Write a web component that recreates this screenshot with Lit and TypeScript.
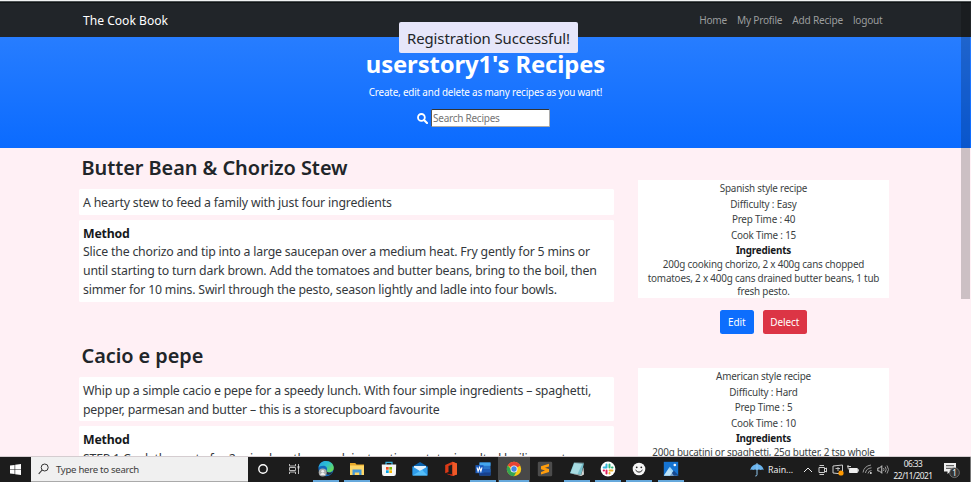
import { LitElement, html, svg, css } from "lit";
import { customElement, property } from "lit/decorators.js";

interface Recipe {
  name: string;
  summary: string[];
  method: string[];
  facts: string[];
  ingredients: string[];
}

const recipes: Recipe[] = [
  {
    name: "Butter Bean & Chorizo Stew",
    summary: ["A hearty stew to feed a family with just four ingredients"],
    method: [
      "Slice the chorizo and tip into a large saucepan over a medium heat. Fry gently for 5 mins or",
      "until starting to turn dark brown. Add the tomatoes and butter beans, bring to the boil, then",
      "simmer for 10 mins. Swirl through the pesto, season lightly and ladle into four bowls.",
    ],
    facts: ["Spanish style recipe", "Difficulty : Easy", "Prep Time : 40", "Cook Time : 15"],
    ingredients: [
      "200g cooking chorizo, 2 x 400g cans chopped",
      "tomatoes, 2 x 400g cans drained butter beans, 1 tub",
      "fresh pesto.",
    ],
  },
  {
    name: "Cacio e pepe",
    summary: [
      "Whip up a simple cacio e pepe for a speedy lunch. With four simple ingredients – spaghetti,",
      "pepper, parmesan and butter – this is a storecupboard favourite",
    ],
    method: ["STEP 1 Cook the pasta for 2 mins less than pack instructions state, in salted boiling water."],
    facts: ["American style recipe", "Difficulty : Hard", "Prep Time : 5", "Cook Time : 10"],
    ingredients: ["200g bucatini or spaghetti, 25g butter, 2 tsp whole"],
  },
];

@customElement("recipe-entry")
export class RecipeEntry extends LitElement {
  @property({ attribute: false }) recipe!: Recipe;

  static styles = css`
    :host { display: grid; grid-template-columns: 535px 251px; column-gap: 24px; padding-left: 79px; height: 188px; color: #212529; white-space: nowrap; }
    .title { margin: 0; height: 41px; line-height: 39px; padding-left: 2.5px; font-size: 19.9px; font-weight: 600; letter-spacing: -0.05px; }
    .box { background: #fff; border-radius: 1.5px; padding: 5px 4px 2px; margin-bottom: 5px; font-size: 12.3px; line-height: 18.7px; color: #34383c; letter-spacing: -0.19px; }
    .strong { font-weight: 700; color: #16191c; }
    .side { padding-top: 32px; text-align: center; }
    .card { background: #fff; height: 118px; font-size: 9.9px; color: #3b3f43; letter-spacing: -0.2px; }
    .fact { height: 15.6px; line-height: 16px; }
    .ing { line-height: 13.6px; }
    .buttons { display: flex; justify-content: center; gap: 9px; margin-top: 12px; }
    .btn { height: 24px; line-height: 25px; border-radius: 2.5px; color: #fff; font-size: 10px; letter-spacing: -0.1px; }
    .edit { background: #0d6efd; width: 33.5px; }
    .del { background: #dc3545; width: 44.5px; }
  `;

  render() {
    const r = this.recipe;
    return html`
      <div>
        <h2 class="title">${r.name}</h2>
        <div class="box">${r.summary.map((l) => html`<div>${l}</div>`)}</div>
        <div class="box"><div class="strong">Method</div>${r.method.map((l) => html`<div>${l}</div>`)}</div>
      </div>
      <div class="side">
        <div class="card">
          ${r.facts.map((f) => html`<div class="fact">${f}</div>`)}
          <div class="fact strong">Ingredients</div>
          ${r.ingredients.map((l) => html`<div class="ing">${l}</div>`)}
        </div>
        <div class="buttons"><div class="btn edit">Edit</div><div class="btn del">Delect</div></div>
      </div>`;
  }
}

const icons = {
  cortana: svg`<circle cx="8" cy="8" r="4.2" fill="none" stroke="#fff" stroke-width="1.4"/>`,
  taskview: svg`<path d="M2.5 3v2h6V3M2.5 13v-2h6v2M2.5 6.5h6v3h-6zM11.5 3v10" fill="none" stroke="#bbb"/><path d="M10.6 5h1.8v2.4h-1.8z" fill="#ddd"/>`,
  edge: svg`<defs><linearGradient id="e" x2="1" y2=".7"><stop offset="0" stop-color="#2a9be0"/><stop offset=".5" stop-color="#2bc0d4"/><stop offset="1" stop-color="#6bdc52"/></linearGradient></defs><circle cx="8" cy="7.7" r="7.6" fill="#1268bd"/><path d="M.5 7C1 2.500 4 0 8 0c4.500 0 7.800 3.200 7.800 6.800 0 3-2.200 4.400-4.800 4.400-2 0-3-.8-2.300-1.800C10 7 8 4.700 5.400 4.700 3 4.700 1 5.500.5 7z" fill="url(#e)"/><path d="M8.500 9.500c.3 2.300 3.500 2.800 6.300 1.200-2.500 4.500-8 3.500-8-.5z" fill="#252a33"/><circle cx="4.700" cy="11.600" r="4" fill="#a9acad"/><circle cx="4.700" cy="10.300" r="1.400" fill="#eee"/><path d="M2.300 14c.3-2.600 4.500-2.600 4.800 0z" fill="#eee"/>`,
  explorer: svg`<path d="M1 2h5.200l1.300 1.500H15V14H1z" fill="#e9a928"/><path d="M1 4.500h14V14H1z" fill="#ffd767"/><path d="M3.500 8.500h9V14h-2.300v-2.500H5.800V14H3.500z" fill="#4598d8"/>`,
  store: svg`<path d="M5 4.500V1.300h6v3.200" fill="none" stroke="#38b3df" stroke-width="1.200"/><path d="M.8 3.500h14.400l-.3 9.500q-.1 2-2 2H3.100q-1.900 0-2-2z" fill="#f4f6f7"/><path d="M5 6h2.700v2.700H5z" fill="#f05125"/><path d="M8.300 6H11v2.700H8.300z" fill="#7eb900"/><path d="M5 9.300h2.700V12H5z" fill="#00a1e8"/><path d="M8.300 9.300H11V12H8.300z" fill="#f9b700"/>`,
  mail: svg`<path d="M.5 5.500 8 1l7.500 4.500V14H.5z" fill="#0a62ad"/><path d="M2 5h12v6H2z" fill="#e4f1fb"/><path d="M.5 5.500 8 10l7.500-4.500V14.500H.5z" fill="#2e9cea"/><path d="M.5 14.500 10 8.800l5.500 5.700z" fill="#54bdf8"/>`,
  office: svg`<path d="M9.500.8 14 2.500v11L9.500 15l-6-2.200 5.800.6V3.600L5.500 5v6L2.200 12.300V4z" fill="#db3a17"/><path d="M9.500.8 14 2.500v11L9.500 15z" fill="#f05a28"/><path d="m3.500 12.800 6 2.200v-1.800z" fill="#aa2014"/>`,
  word: svg`<path d="M4.500 1.500h11v13h-11z" fill="#2a76c9"/><path d="M4.500 1.500h11v3.300h-11z" fill="#43a6ed"/><path d="M4.500 8h11v3.300h-11z" fill="#1f5bb5"/><path d="M4.500 11.300h11v3.200h-11z" fill="#183f8c"/><path d="M.5 4.200h8v8h-8z" fill="#195abe"/><path d="m2 6.300 1.100 4 1.400-4 1.400 4L7 6.300" fill="none" stroke="#fff" stroke-width="1.100"/>`,
  chrome: svg`<circle cx="8" cy="8" r="7.200" fill="#f9c915"/><path d="M8 8 1.760 4.400A7.200 7.200 0 0 1 14.240 4.400z" fill="#e84335"/><path d="M8 8H4.800L1.760 4.400A7.200 7.200 0 0 0 8 15.200l3-5.600z" fill="#34a552"/><path d="M8 4.500h6.300L11 6z" fill="#e84335"/><circle cx="8" cy="8" r="3.500" fill="#f6f6f6"/><circle cx="8" cy="8" r="2.700" fill="#4285e8"/>`,
  sublime: svg`<rect x=".8" y=".8" width="14.400" height="14.400" rx="1.200" fill="#4c4c4c"/><path d="m12 2.800-8 2.500v3l4 1.300-4 1.300V13.500l8-2.600v-3L8 6.700l4-1.300z" fill="#ff9d0c"/>`,
  notes: svg`<path d="M5 1.500 15 2l-2.800 12L1 12.200z" fill="#76bfcb"/><path d="m5.500 2 8 .5-5 10.500-7-1z" fill="#a9dce2"/><path d="m1 12.200 11.200 1.800 2.300-8 .5 7.500-2.800 1.500z" fill="#d6d9d7"/><path d="M5 1.500 15 2" stroke="#4c5c5f"/>`,
  slack: svg`<circle cx="8" cy="8" r="7.400" fill="#fff"/><g fill="none" stroke-width="2" stroke-linecap="round"><path d="M6.500 3.500v3M3.700 6.500h2.500" stroke="#36b7dc"/><path d="M9.500 3.500v3M12.500 6.500h-.5" stroke="#2eb67d"/><path d="M9.600 9.500h2.800M9.500 12v.5" stroke="#ecb22e"/><path d="M6.500 9.600v2.900M3.700 9.500H4" stroke="#e01e5a"/></g>`,
  smile: svg`<circle cx="8" cy="8" r="6.300" fill="#f5f5f5"/><circle cx="5.700" cy="6.300" r=".9" fill="#222"/><circle cx="10.300" cy="6.300" r=".9" fill="#222"/><path d="M4.500 9q3.500 4.300 7 0" fill="none" stroke="#222"/>`,
  photos: svg`<path d="M.8.800h14.400v14H.8z" fill="#1674d2"/><path d="m.8 14.800 6-9 7.500 9z" fill="#a2d8f7"/><path d="m6.800 14.800 4-5.300 4.400 4.500v.8z" fill="#16498e"/><path d="m.8 14.800 5-7.500 5 7.500z" fill="#d2edfa" opacity=".55"/><circle cx="11.800" cy="4" r="1.300" fill="#fff"/>`,
};

const apps: { icon: keyof typeof icons; state?: string }[] = [
  { icon: "cortana" }, { icon: "taskview" }, { icon: "edge", state: "open" }, { icon: "explorer", state: "open" },
  { icon: "store" }, { icon: "mail" }, { icon: "office" }, { icon: "word", state: "open" },
  { icon: "chrome", state: "active" }, { icon: "sublime" }, { icon: "notes", state: "open" },
  { icon: "slack", state: "open" }, { icon: "smile", state: "open" }, { icon: "photos", state: "open" },
];

@customElement("task-bar")
export class TaskBar extends LitElement {
  static styles = css`
    :host { display: flex; height: 25px; background: #1c1c1c; color: #eee; font-size: 8.8px; white-space: nowrap; }
    svg { display: block; }
    .start { width: 31px; display: grid; place-items: center; }
    .search { width: 216.500px; height: 24px; background: #f0f0f0; color: #3d3d3d; display: flex; align-items: center; font-size: 9.6px; letter-spacing: -0.28px; box-sizing: border-box; padding-left: 7px; gap: 7px; box-shadow: 0 1px #aaa; }
    .app { width: 31.350px; box-sizing: border-box; padding-top: 4px; display: flex; flex-direction: column; align-items: center; justify-content: space-between; }
    .active { background: #484848; }
    .bar { height: 2px; width: 26px; }
    .open .bar, .active .bar { background: #66a9dc; }
    .active .bar { width: 30px; }
    .tray { margin-left: auto; display: flex; align-items: center; }
    .cell { width: 15px; display: grid; place-items: center; }
    .rain { width: 32px; padding-left: 4px; }
    .clock { width: 46px; text-align: center; line-height: 11.500px; font-size: 8.300px; letter-spacing: -0.5px; }
    .note { width: 34px; display: grid; place-items: center start; }
    .note svg { margin-left: 6px; }
    .desk { width: 1px; height: 25px; background: #777; }
    .num { font-size: 8px; }
  `;

  render() {
    return html`
      <div class="start"><svg width="11" height="11" viewBox="0 0 11 11"><path d="M0 1.500 4.600.9v4.300H0zM5.200.8 11 0v5.200H5.200zM0 5.800h4.600v4.300L0 9.500zM5.200 5.800H11V11l-5.800-.8z" fill="#fff"/></svg></div>
      <div class="search">
        <svg width="11" height="12" viewBox="0 0 11 12"><circle cx="6.700" cy="4.500" r="3.500" fill="none" stroke="#333"/><path d="M4.200 7 .7 10.800" stroke="#333" stroke-width="1.100"/></svg>
        <span>Type here to search</span>
      </div>
      ${apps.map((a) => html`<div class="app ${a.state ?? ""}"><svg width="16" height="16" viewBox="0 0 16 16">${icons[a.icon]}</svg><div class="bar"></div></div>`)}
      <div class="tray">
        <svg width="14" height="14" viewBox="0 0 14 14"><path d="M.3 7.300C.8 3.500 3.500 1.200 7 1.200s6.200 2.300 6.700 6.100q-1.500-1.300-2.800-.2-1.900-1.300-3.900 0-2-1.300-3.900 0Q1.800 6 .3 7.300z" fill="#6ab4ee"/><path d="M7 0v11.500q0 1.700-1.700 1.500" fill="none" stroke="#8ec8f2"/></svg>
        <span class="rain">Rain...</span>
        <div class="cell"><svg width="10" height="8" viewBox="0 0 10 8"><path d="m1 6 4-4 4 4" fill="none" stroke="#eee"/></svg></div>
        <div class="cell"><svg width="11" height="12" viewBox="0 0 11 12"><path d="M2 3.500h5.500v5H2zM7.500 5 9.500 4v4l-2-1M2.500 1.500h4.500M2.500 10.500h4.500" fill="none" stroke="#ccc"/></svg></div>
        <div class="cell"><svg width="12" height="12" viewBox="0 0 12 12"><path d="M1 2 10.500 1v9L1 9z" fill="none" stroke="#ccc"/><path d="M3.500 4.500H8M6 3v4" stroke="#bbb"/><circle cx="9" cy="9" r="2.600" fill="#f90"/></svg></div>
        <div class="cell"><svg width="12" height="10" viewBox="0 0 12 10"><path d="M2.500 3.500h7.800v4H2.500z" fill="#eee" stroke="#eee"/><path d="M10.800 4.300h1v2.300h-1z" fill="#ddd"/><path d="M.3 1.500H4M1 0v3.500L3 5" stroke="#ccc" fill="none"/></svg></div>
        <div class="cell"><svg width="11" height="11" viewBox="0 0 11 11" fill="none" stroke="#999"><path d="M1 8.500Q2 2 9 1M3.500 9Q4 4.500 9.500 3.800M6 9.500q.2-2.700 3.500-3"/><circle cx="8.800" cy="9" r="1" fill="#ddd" stroke="none"/></svg></div>
        <div class="cell"><svg width="12" height="11" viewBox="0 0 12 11" fill="none" stroke="#ccc"><path d="M.8 4h1.700l2.300-2.300v7.600L2.500 7H.8z"/><path d="M6.500 4q1 1.500 0 3M8.200 2.700q2 2.800 0 5.600M10 1.500q3 4 0 8" stroke="#999"/></svg></div>
        <div class="clock"><div>06:33</div><div>22/11/2021</div></div>
        <div class="note"><svg width="20" height="18" viewBox="0 0 20 18"><path d="M2 2h12v8.500H8.500L5.500 13v-2.500H2z" fill="#eee"/><path d="M4 4.700h8M4 7.300h8" stroke="#444"/><circle cx="12.500" cy="11.700" r="4.900" fill="#343434" stroke="#999" stroke-width=".6"/><text class="num" x="12.500" y="14.600" text-anchor="middle" fill="#fff">1</text></svg></div>
        <div class="desk"></div>
      </div>`;
  }
}

@customElement("app-root")
export class AppRoot extends LitElement {
  static styles = css`
    :host { display: flex; flex-direction: column; position: relative; width: 971px; height: 482px; overflow: hidden; background: #fff0f5; font-family: "Noto Sans", "Open Sans", sans-serif; }
    .nav { flex: none; box-sizing: border-box; height: 37px; background: #212529; border-top: 1px solid #f2f4f4; box-shadow: inset 0 1px #4d5254, inset 0 2px #111516; display: flex; justify-content: space-between; align-items: center; padding: 2px 88.500px 0 83px; white-space: nowrap; }
    .brand { color: #fff; font-size: 12.1px; }
    .links { display: flex; gap: 10px; color: #9b9d9e; font-size: 10.1px; letter-spacing: -0.22px; }
    .hero { flex: none; height: 111px; box-sizing: border-box; padding-top: 10px; background: linear-gradient(#277dff, #0b6bff); color: #fff; display: flex; flex-direction: column; align-items: center; white-space: nowrap; }
    .heading { margin: 0; font-size: 23.800px; line-height: 34px; font-weight: 700; letter-spacing: -0.1px; }
    .lead { margin: 0; font-size: 9.900px; line-height: 14px; padding-top: 4px; letter-spacing: -0.18px; }
    .find { display: flex; align-items: center; gap: 3px; margin-top: 10px; padding-right: 4px; }
    .field { width: 119px; height: 18px; box-sizing: border-box; border: 1px solid #555; border-top-color: #333; border-right-color: #aaa; border-bottom-color: #aaa; border-radius: 1.500px; background: #fff; color: #757575; font-size: 10px; letter-spacing: -0.25px; line-height: 17px; padding-left: 1px; }
    .main { flex: 1; min-height: 0; overflow: hidden; }
    .toast { position: absolute; left: 399px; top: 22px; width: 179px; height: 31px; border-radius: 2px; background: #e6e6fa; color: #212529; text-align: center; font-size: 14.900px; letter-spacing: -0.1px; line-height: 32px; white-space: nowrap; }
    .scroll { position: absolute; right: 1px; top: 2px; width: 9px; height: 297px; background: rgba(0, 0, 0, 0.2); }
    task-bar { flex: none; border-top: 1px solid #d5cdd0; margin-top: -1px; }
  `;

  render() {
    return html`
      <nav class="nav">
        <span class="brand">The Cook Book</span>
        <div class="links"><span>Home</span><span>My Profile</span><span>Add Recipe</span><span>logout</span></div>
      </nav>
      <header class="hero">
        <h1 class="heading">userstory1's Recipes</h1>
        <p class="lead">Create, edit and delete as many recipes as you want!</p>
        <div class="find">
          <svg width="11" height="11" viewBox="0 0 11 11"><circle cx="4.400" cy="4.400" r="3.400" fill="none" stroke="#fff" stroke-width="1.800"/><path d="m7 7 3 3" stroke="#fff" stroke-width="2.100" stroke-linecap="round"/></svg>
          <div class="field">Search Recipes</div>
        </div>
      </header>
      <main class="main">${recipes.map((r) => html`<recipe-entry .recipe=${r}></recipe-entry>`)}</main>
      <task-bar></task-bar>
      <div class="toast">Registration Successful!</div>
      <div class="scroll"></div>`;
  }
}
